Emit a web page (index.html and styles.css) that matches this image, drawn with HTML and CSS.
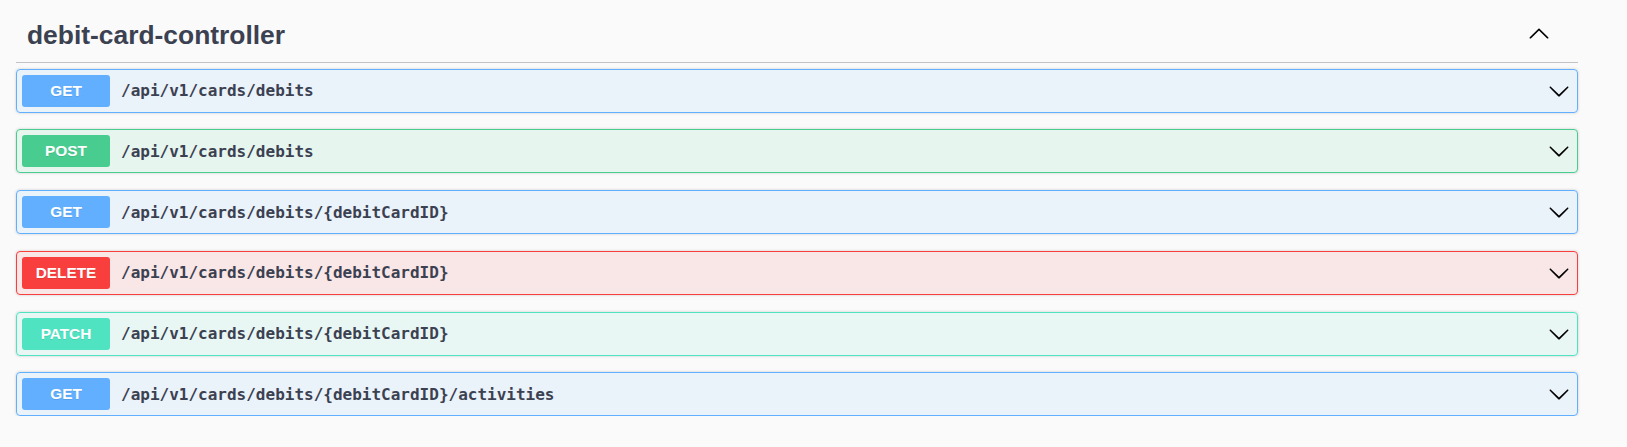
FILE: index.html
```html
<!DOCTYPE html>
<html lang="en">
<head>
<meta charset="utf-8">
<title>debit-card-controller</title>
<link rel="stylesheet" href="styles.css">
</head>
<body>
<div class="wrapper">
  <section class="tag-section">
    <h4 class="opblock-tag">
      <span class="tag-name">debit-card-controller</span>
      <button class="expand-btn" type="button" aria-label="collapse">
        <svg class="arrow up" viewBox="0 0 20 20" width="22" height="22"><path d="M17.418 14.908c.272.268.709.268.979 0s.271-.701 0-.969l-7.908-7.83c-.27-.268-.707-.268-.979 0l-7.908 7.83c-.27.268-.27.701 0 .969.271.268.709.268.979 0L10 7.779l7.418 7.129z"/></svg>
      </button>
    </h4>
    <div class="ops">
      <div class="opblock get">
        <span class="method">GET</span>
        <span class="path">/api/v1/cards/debits</span>
        <svg class="arrow" viewBox="0 0 20 20" width="22" height="22"><path d="M17.418 6.109c.272-.268.709-.268.979 0s.271.701 0 .969l-7.908 7.83c-.27.268-.707.268-.979 0l-7.908-7.83c-.27-.268-.27-.701 0-.969.271-.268.709-.268.979 0L10 13.25l7.418-7.141z"/></svg>
      </div>
      <div class="opblock post">
        <span class="method">POST</span>
        <span class="path">/api/v1/cards/debits</span>
        <svg class="arrow" viewBox="0 0 20 20" width="22" height="22"><path d="M17.418 6.109c.272-.268.709-.268.979 0s.271.701 0 .969l-7.908 7.83c-.27.268-.707.268-.979 0l-7.908-7.83c-.27-.268-.27-.701 0-.969.271-.268.709-.268.979 0L10 13.25l7.418-7.141z"/></svg>
      </div>
      <div class="opblock get">
        <span class="method">GET</span>
        <span class="path">/api/v1/cards/debits/{debitCardID}</span>
        <svg class="arrow" viewBox="0 0 20 20" width="22" height="22"><path d="M17.418 6.109c.272-.268.709-.268.979 0s.271.701 0 .969l-7.908 7.83c-.27.268-.707.268-.979 0l-7.908-7.83c-.27-.268-.27-.701 0-.969.271-.268.709-.268.979 0L10 13.25l7.418-7.141z"/></svg>
      </div>
      <div class="opblock delete">
        <span class="method">DELETE</span>
        <span class="path">/api/v1/cards/debits/{debitCardID}</span>
        <svg class="arrow" viewBox="0 0 20 20" width="22" height="22"><path d="M17.418 6.109c.272-.268.709-.268.979 0s.271.701 0 .969l-7.908 7.83c-.27.268-.707.268-.979 0l-7.908-7.83c-.27-.268-.27-.701 0-.969.271-.268.709-.268.979 0L10 13.25l7.418-7.141z"/></svg>
      </div>
      <div class="opblock patch">
        <span class="method">PATCH</span>
        <span class="path">/api/v1/cards/debits/{debitCardID}</span>
        <svg class="arrow" viewBox="0 0 20 20" width="22" height="22"><path d="M17.418 6.109c.272-.268.709-.268.979 0s.271.701 0 .969l-7.908 7.83c-.27.268-.707.268-.979 0l-7.908-7.83c-.27-.268-.27-.701 0-.969.271-.268.709-.268.979 0L10 13.25l7.418-7.141z"/></svg>
      </div>
      <div class="opblock get">
        <span class="method">GET</span>
        <span class="path">/api/v1/cards/debits/{debitCardID}/activities</span>
        <svg class="arrow" viewBox="0 0 20 20" width="22" height="22"><path d="M17.418 6.109c.272-.268.709-.268.979 0s.271.701 0 .969l-7.908 7.83c-.27.268-.707.268-.979 0l-7.908-7.83c-.27-.268-.27-.701 0-.969.271-.268.709-.268.979 0L10 13.25l7.418-7.141z"/></svg>
      </div>
    </div>
  </section>
</div>
</body>
</html>
```

FILE: styles.css
```css
html, body {
  margin: 0;
  padding: 0;
  background: #fafafa;
}

.wrapper {
  padding: 8px 49px 0 16px;
  font-family: "Liberation Sans", Arial, sans-serif;
  color: #3b4151;
}

.opblock-tag {
  display: flex;
  align-items: center;
  margin: 0 0 5.5px 0;
  padding: 11px 28px 11px 11px;
  border-bottom: 1px solid rgba(59, 65, 81, 0.3);
  font-size: 26.4px;
  line-height: 32px;
  font-weight: 700;
  color: #3b4151;
}

.tag-name {
  flex: 1;
}

.expand-btn {
  display: flex;
  padding: 0;
  margin: -4px 0 0 0;
  border: none;
  background: none;
}

.arrow {
  display: block;
  fill: #000;
  flex: none;
}

.ops {
  display: flex;
  flex-direction: column;
  gap: 16.8px;
}

.opblock {
  display: flex;
  align-items: center;
  height: 42px;
  padding: 0 7px 0 5px;
  border: 1px solid #61affe;
  border-radius: 4px;
  box-shadow: 0 0 3px rgba(0, 0, 0, 0.19);
}

.method {
  display: flex;
  align-items: center;
  justify-content: center;
  width: 88px;
  height: 32px;
  border-radius: 3px;
  font-family: "Liberation Sans", Arial, sans-serif;
  font-size: 15.4px;
  font-weight: 700;
  color: #fff;
  text-shadow: 0 1px 0 rgba(0, 0, 0, 0.1);
  flex: none;
}

.path {
  flex: 1;
  padding-left: 11px;
  font-family: "DejaVu Sans Mono", "Liberation Mono", monospace;
  font-size: 16px;
  font-weight: 600;
  color: #3b4151;
}

.get {
  background: rgba(97, 175, 254, 0.1);
  border-color: #61affe;
}
.get .method { background: #61affe; }

.post {
  background: rgba(73, 204, 144, 0.1);
  border-color: #49cc90;
}
.post .method { background: #49cc90; }

.delete {
  background: rgba(249, 62, 62, 0.1);
  border-color: #f93e3e;
}
.delete .method { background: #f93e3e; }

.patch {
  background: rgba(80, 227, 194, 0.1);
  border-color: #50e3c2;
}
.patch .method { background: #50e3c2; }
```
